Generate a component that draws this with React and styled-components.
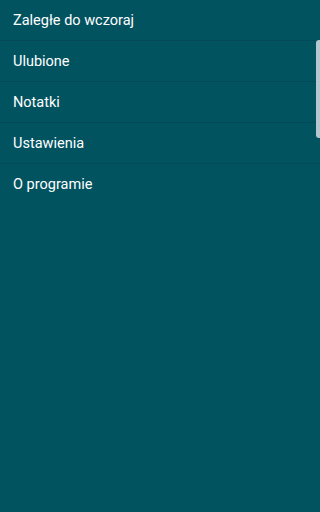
import styled, { createGlobalStyle } from "styled-components";

const Global = createGlobalStyle`
  html, body {
    margin: 0;
    padding: 0;
    background: #025360;
  }
`;

const Drawer = styled.nav`
  position: relative;
  width: 100%;
  height: 100vh;
  background: #025360;
  font-family: Roboto, "Noto Sans", sans-serif;
  overflow: hidden;
`;

const List = styled.ul`
  list-style: none;
  margin: 0;
  padding: 0;
`;

const Item = styled.li`
  display: flex;
  align-items: center;
  height: 40px;
  padding-left: 13px;
  color: #ffffff;
  font-size: 14.5px;
  border-bottom: ${(p) => (p.$last ? "none" : "1px solid #02475a")};
  box-sizing: content-box;
`;

const Scrollbar = styled.div`
  position: absolute;
  top: 40px;
  right: 0;
  width: 4px;
  height: 98px;
  border-radius: 3px 0 0 3px;
  background: #b3c9cf;
`;

const items = ["Zaległe do wczoraj", "Ulubione", "Notatki", "Ustawienia", "O programie"];

export default function App() {
  return (
    <>
      <Global />
      <Drawer>
        <List>
          {items.map((t, i) => (
            <Item key={t} $last={i === items.length - 1}>
              {t}
            </Item>
          ))}
        </List>
        <Scrollbar />
      </Drawer>
    </>
  );
}
